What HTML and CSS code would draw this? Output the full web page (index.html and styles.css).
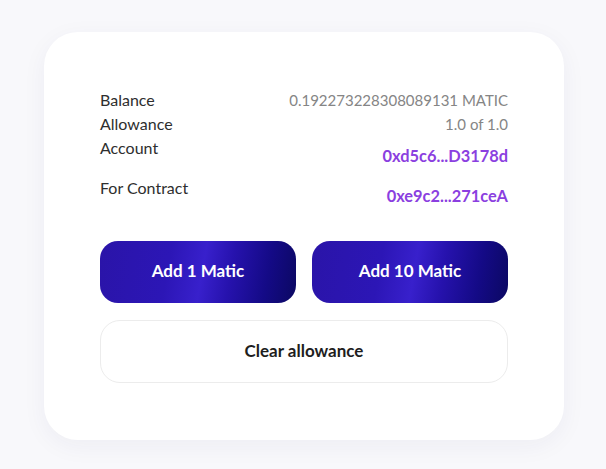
FILE: index.html
```html
<!DOCTYPE html>
<html>
<head>
<meta charset="utf-8">
<link rel="stylesheet" href="styles.css">
</head>
<body>
<div class="card">
  <div class="info">
    <div class="row"><span class="label">Balance</span><span class="value">0.192273228308089131 MATIC</span></div>
    <div class="row"><span class="label">Allowance</span><span class="value">1.0 of 1.0</span></div>
    <div class="row addr-row"><span class="label">Account</span><span class="addr">0xd5c6...D3178d</span></div>
    <div class="row addr-row"><span class="label">For Contract</span><span class="addr">0xe9c2...271ceA</span></div>
  </div>
  <div class="actions">
    <button class="btn primary">Add 1 Matic</button>
    <button class="btn primary">Add 10 Matic</button>
  </div>
  <button class="btn secondary">Clear allowance</button>
</div>
</body>
</html>
```

FILE: styles.css
```css
html, body {
  margin: 0;
  padding: 0;
}
body {
  background: #f8f8fb;
  font-family: Lato, "Open Sans", sans-serif;
  padding: 32px 42px 29px 44px;
}
.card {
  width: 408px;
  background: #fff;
  border-radius: 34px;
  padding: 56px 56px 57px 56px;
  box-shadow: 0 6px 24px rgba(40, 40, 90, 0.05);
}
.info {
  display: flex;
  flex-direction: column;
}
.row {
  display: flex;
  justify-content: space-between;
  align-items: flex-start;
  line-height: 24px;
  font-size: 16px;
}
.label {
  color: #2e2e2e;
}
.value {
  color: #858585;
  font-size: 15px;
}
.addr-row {
  margin-bottom: 8px;
}
.addr-row:last-child {
  margin-bottom: 0;
}
.addr {
  margin-top: 8px;
  color: #8b3fe0;
  font-weight: 700;
  font-size: 16.4px;
}
.actions {
  display: grid;
  grid-template-columns: 1fr 1fr;
  gap: 16px;
  margin-top: 33px;
}
.btn {
  font-family: Lato, "Open Sans", sans-serif;
  font-size: 17px;
  font-weight: 700;
  height: 62px;
  border-radius: 18px;
  padding: 0 0 3px 0;
  cursor: pointer;
}
.primary {
  border: none;
  color: #fff;
  background: linear-gradient(100deg, #2a14a8 0%, #2c16b6 35%, #3820cc 52%, #2612ad 66%, #140a86 84%, #0b0862 100%);
}
.secondary {
  display: block;
  width: 100%;
  margin-top: 17px;
  height: 63px;
  background: #fff;
  border: 1px solid #ececec;
  border-radius: 20px;
  color: #1e1e1e;
}
```
